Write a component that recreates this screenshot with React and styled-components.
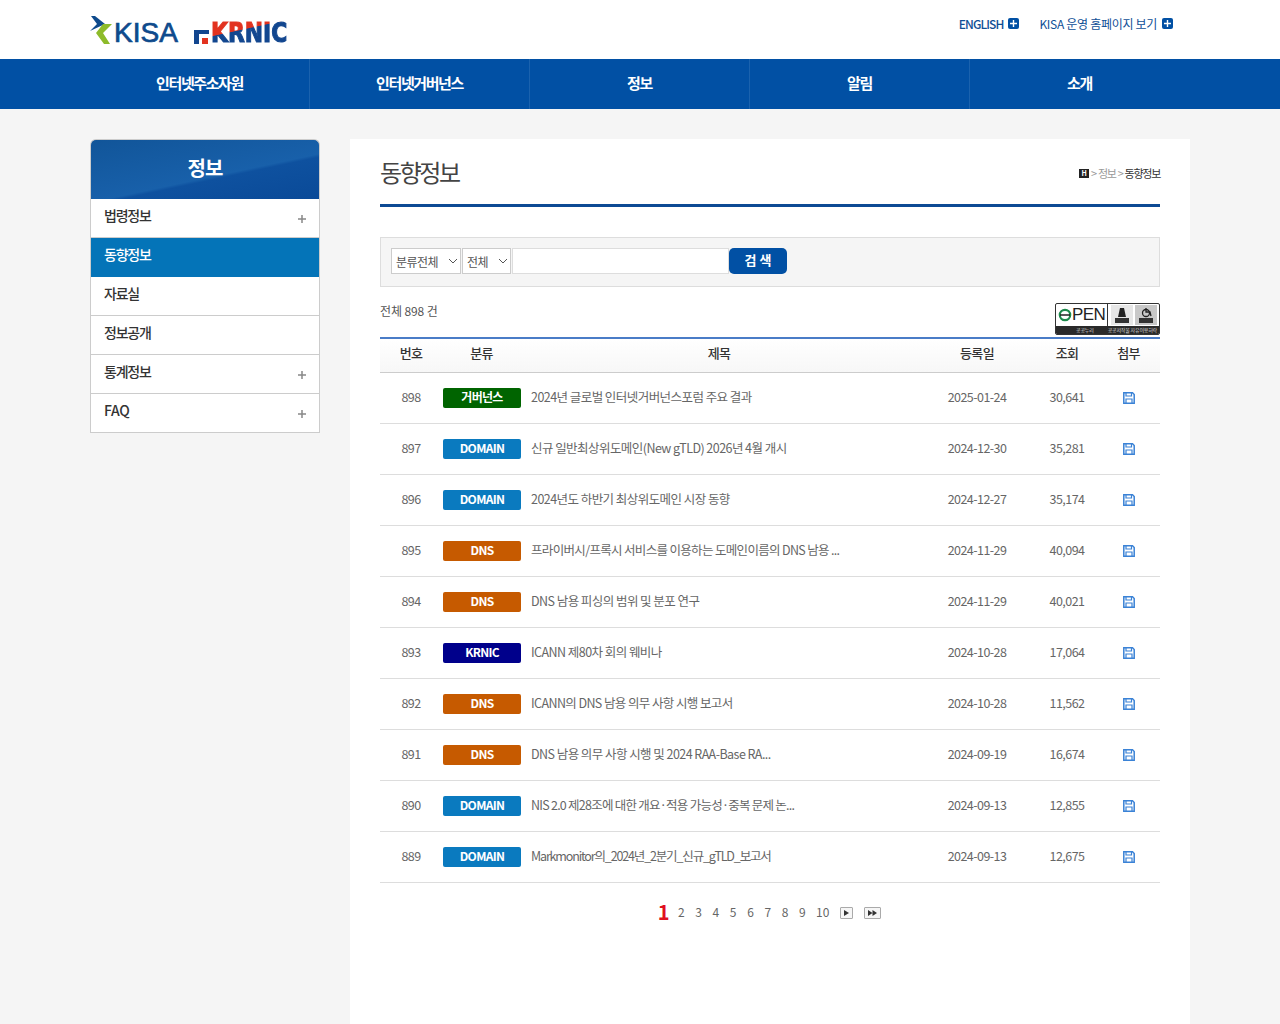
import React from 'react';
import styled, { createGlobalStyle } from 'styled-components';

const GlobalStyle = createGlobalStyle`
  html, body {
    margin: 0;
    padding: 0;
    background: #f5f5f5;
    font-family: "Noto Sans CJK KR", "Noto Sans", sans-serif;
    color: #555;
  }
  * { box-sizing: border-box; }
`;

const Page = styled.div`
  width: 1280px;
  height: 1024px;
  overflow: hidden;
`;

const Header = styled.header`
  height: 59px;
  background: #fff;
  padding: 0 90px;
  display: flex;
  justify-content: space-between;
`;

const Logos = styled.div`
  display: flex;
  align-items: flex-start;
  padding-top: 15px;
`;

const KisaLogo = styled.div`
  display: flex;
  align-items: center;
  width: 104px;
  height: 30px;
`;

const KisaText = styled.span`
  font-family: "Liberation Sans", sans-serif;
  font-size: 28px;
  line-height: 30px;
  letter-spacing: 0;
  color: #0e4a8c;
  -webkit-text-stroke: 0.7px #0e4a8c;
  padding-top: 5px;
`;

const KrnicLogo = styled.div`
  display: flex;
  align-items: flex-end;
  height: 29px;
  padding-top: 6px;
`;

const KrnicText = styled.span`
  font-family: "DejaVu Sans", sans-serif;
  font-weight: 700;
  font-size: 27px;
  line-height: 23px;
  transform: scaleX(0.81);
  transform-origin: left;
  margin-left: 2px;
  -webkit-text-stroke: 1.2px transparent;
  background: linear-gradient(170deg, #e2321f 0 38%, #12468f 40% 100%);
  -webkit-background-clip: text;
  background-clip: text;
  color: transparent;
`;

const TopLinks = styled.div`
  display: flex;
  gap: 20px;
  padding: 14px 17px 0 0;
`;

const TopLink = styled.a`
  display: flex;
  align-items: center;
  gap: 5px;
  height: 18px;
  font-size: 12px;
  letter-spacing: ${p => (p.$bold ? '-0.9px' : '-0.3px')};
  color: #0f4f96;
  font-weight: ${p => (p.$bold ? 500 : 400)};
`;

const PlusBox = styled.span`
  width: 11px;
  height: 11px;
  border-radius: 2px;
  background: #0150a4;
  color: #fff;
  display: flex;
  align-items: center;
  justify-content: center;
  margin-top: 1px;
`;

const Nav = styled.nav`
  height: 50px;
  background: #0150a4;
  padding: 0 90px;
  display: flex;
`;

const NavItem = styled.a`
  width: 220px;
  display: flex;
  align-items: center;
  justify-content: center;
  color: #fff;
  font-size: 15px;
  font-weight: 700;
  letter-spacing: -1.4px;
  padding-bottom: 4px;
  border-right: 1px solid ${p => (p.$last ? 'transparent' : '#1a62ae')};
`;

const Body = styled.div`
  display: flex;
  gap: 30px;
  padding: 30px 90px 0;
`;

const Side = styled.aside`
  width: 230px;
  flex-shrink: 0;
`;

const SideTitle = styled.div`
  height: 60px;
  border: 1px solid #ccc;
  border-bottom: 0;
  border-radius: 6px 6px 0 0;
  display: flex;
  align-items: center;
  justify-content: center;
  color: #fff;
  font-size: 20px;
  font-weight: 700;
  letter-spacing: -0.8px;
  padding-bottom: 4px;
  background: linear-gradient(168deg, #115599 0%, #1860aa 58%, #0e519f 61%, #0a4a98 100%);
`;

const SideList = styled.ul`
  list-style: none;
  margin: 0;
  padding: 0;
  border: 1px solid #ccc;
  border-top: 0;
`;

const SideItem = styled.li`
  height: 39px;
  padding: 0 13px 6px;
  display: flex;
  align-items: center;
  justify-content: space-between;
  font-size: 14px;
  font-weight: 500;
  letter-spacing: ${p => (p.$latin ? '-0.3px' : '-1.2px')};
  color: ${p => (p.$active ? '#fff' : '#333')};
  background: ${p => (p.$active ? '#0474b8' : '#fff')};
  border-bottom: 1px solid ${p => (p.$active ? '#0474b8' : '#ccc')};
  &:last-child { border-bottom: 0; height: 38px; }
`;

const SidePlus = styled.span`
  color: #888;
  display: flex;
  margin: 7px 0 0;
`;

const Main = styled.main`
  width: 840px;
  height: 900px;
  background: #fff;
  padding: 0 30px;
`;

const TitleRow = styled.div`
  height: 68px;
  border-bottom: 3px solid #0d4a94;
  display: flex;
  align-items: flex-start;
  justify-content: space-between;
`;

const PageTitle = styled.h2`
  margin: 14px 0 0;
  font-size: 24px;
  line-height: 38px;
  font-weight: 400;
  letter-spacing: -2.4px;
  color: #444;
`;

const Crumbs = styled.div`
  margin-top: 26px;
  display: flex;
  align-items: center;
  gap: 2px;
  font-size: 11px;
  line-height: 17px;
  letter-spacing: -1.25px;
  color: #999;
`;

const HomeMark = styled.span`
  width: 10px;
  height: 9px;
  background: #222;
  color: #fff;
  font-size: 7px;
  line-height: 9px;
  font-weight: 700;
  text-align: center;
  letter-spacing: 0;
`;

const CrumbNow = styled.span`
  color: #333;
`;

const SearchBox = styled.form`
  margin-top: 30px;
  height: 50px;
  background: #f5f5f5;
  border: 1px solid #ddd;
  padding: 10px 10px 0;
  display: flex;
  align-items: flex-start;
`;

const FakeSelect = styled.div`
  width: ${p => p.$width}px;
  height: 26px;
  background: #fff;
  border: 1px solid #ccc;
  margin-right: 1px;
  padding: 0 2px 0 4px;
  display: flex;
  align-items: center;
  justify-content: space-between;
  font-size: 12px;
  letter-spacing: -0.5px;
  color: #555;
  svg { color: #555; }
`;

const SearchInput = styled.input`
  width: 217px;
  height: 26px;
  background: #fff;
  border: 1px solid #ddd;
  outline: 0;
  margin: 0;
`;

const SearchButton = styled.button`
  width: 58px;
  height: 26px;
  border: 0;
  border-radius: 5px;
  background: #0150a4;
  color: #fff;
  font-family: inherit;
  font-size: 13px;
  font-weight: 700;
  letter-spacing: 0;
  padding: 0 0 4px;
`;

const InfoRow = styled.div`
  height: 50px;
  display: flex;
  justify-content: space-between;
  align-items: flex-start;
  padding-top: 15px;
`;

const Total = styled.span`
  font-size: 12px;
  line-height: 18px;
  letter-spacing: -0.1px;
  color: #555;
`;

const OpenBadge = styled.div`
  width: 105px;
  height: 32px;
  margin-top: 1px;
  display: flex;
  flex-direction: column;
  border: 1px solid #333;
  border-radius: 2px;
  background: #fff;
  overflow: hidden;
`;

const BadgeTop = styled.div`
  height: 22px;
  display: flex;
  align-items: center;
  padding-left: 2px;
`;

const OpenWord = styled.span`
  font-family: "Liberation Sans", sans-serif;
  font-size: 17px;
  line-height: 22px;
  letter-spacing: -0.6px;
  color: #222;
  flex: 1;
  display: flex;
  align-items: center;
  border-right: 1px solid #333;
  margin-right: 3px;
`;

const BadgeCell = styled.span`
  width: 22px;
  height: 20px;
  margin-right: 2px;
  display: flex;
  align-items: center;
  justify-content: center;
  background: ${p => (p.$light ? '#c8c8c8' : '#e6e6e6')};
`;

const BadgeBottom = styled.div`
  flex: 1;
  background: #2a2a2a;
  color: #ddd;
  font-size: 5px;
  line-height: 8px;
  display: flex;
  justify-content: space-between;
  padding: 0 2px 0 20px;
  letter-spacing: -0.2px;
`;

const Table = styled.table`
  width: 780px;
  border-collapse: collapse;
  table-layout: fixed;
  border-top: 2px solid #4a7cc7;
`;

const HeadCell = styled.th`
  height: 34px;
  border-bottom: 1px solid #ccc;
  background: linear-gradient(180deg, #fff 0%, #f7f7f7 100%);
  font-size: 13px;
  font-weight: 500;
  letter-spacing: -0.7px;
  color: #333;
  padding: 0 0 5px;
`;

const Cell = styled.td`
  height: 51px;
  border-bottom: 1px solid #ddd;
  text-align: ${p => (p.$left ? 'left' : 'center')};
  font-size: 12.5px;
  letter-spacing: ${p => p.$spacing || '-0.55px'};
  color: #666;
  padding: ${p => (p.$left ? '0 10px 2px' : '0 0 2px')};
  white-space: nowrap;
`;

const IconCell = styled.td`
  height: 51px;
  border-bottom: 1px solid #ddd;
  padding: 0;
`;

const Badge = styled.span`
  display: block;
  width: 78px;
  height: 20px;
  margin: 2px 0 0 1px;
  border-radius: 2px;
  background: ${p => p.$color};
  color: #fff;
  font-size: 12px;
  font-weight: 700;
  line-height: 18px;
  text-align: center;
  letter-spacing: -0.7px;
`;

const FileIcon = styled.svg`
  display: block;
  margin: 0 auto;
`;

const Pager = styled.div`
  display: flex;
  align-items: center;
  justify-content: center;
  margin-top: 17px;
  padding-right: 4px;
  height: 24px;
  font-size: 12px;
  color: #666;
`;

const PageNum = styled.a`
  width: 17.3px;
  margin-left: ${p => (p.$wide ? '3px' : '0')};
  text-align: center;
`;

const PageCurrent = styled.a`
  width: 18px;
  text-align: center;
  color: #e0101f;
  font-size: 20px;
  font-weight: 700;
  line-height: 24px;
`;

const PageArrow = styled.span`
  width: ${p => p.$width}px;
  height: 12px;
  margin: 2px 0 0 ${p => p.$gap}px;
  border: 1px solid #aaa;
  border-radius: 1px;
  background: #f6f6f6;
  display: flex;
  align-items: center;
  justify-content: center;
`;

const menus = ['인터넷주소자원', '인터넷거버넌스', '정보', '알림', '소개'];

const sideMenus = [
  { name: '법령정보', plus: true },
  { name: '동향정보', active: true },
  { name: '자료실' },
  { name: '정보공개' },
  { name: '통계정보', plus: true },
  { name: 'FAQ', plus: true, latin: true },
];

const colors = {
  거버넌스: '#006400',
  DOMAIN: '#0a7abf',
  DNS: '#c65a00',
  KRNIC: '#00008b',
};

const rows = [
  [898, '거버넌스', '2024년 글로벌 인터넷거버넌스포럼 주요 결과', '2025-01-24', '30,641'],
  [897, 'DOMAIN', '신규 일반최상위도메인(New gTLD) 2026년 4월 개시', '2024-12-30', '35,281'],
  [896, 'DOMAIN', '2024년도 하반기 최상위도메인 시장 동향', '2024-12-27', '35,174'],
  [895, 'DNS', '프라이버시/프록시 서비스를 이용하는 도메인이름의 DNS 남용 ...', '2024-11-29', '40,094', '-0.67px'],
  [894, 'DNS', 'DNS 남용 피싱의 범위 및 분포 연구', '2024-11-29', '40,021'],
  [893, 'KRNIC', 'ICANN 제80차 회의 웨비나', '2024-10-28', '17,064'],
  [892, 'DNS', 'ICANN의 DNS 남용 의무 사항 시행 보고서', '2024-10-28', '11,562', '-0.6px'],
  [891, 'DNS', 'DNS 남용 의무 사항 시행 및 2024 RAA-Base RA...', '2024-09-19', '16,674'],
  [890, 'DOMAIN', 'NIS 2.0 제28조에 대한 개요·적용 가능성·중복 문제 논...', '2024-09-13', '12,855', '-0.75px'],
  [889, 'DOMAIN', 'Markmonitor의_2024년_2분기_신규_gTLD_보고서', '2024-09-13', '12,675', '-1.15px'],
];

const widths = [62, 79, 396, 120, 60, 63];

const Plus = ({ size = 7, weight = 1.6 }) => (
  <svg width={size} height={size} viewBox="0 0 8 8">
    <path d="M4 0v8M0 4h8" stroke="currentColor" strokeWidth={weight} />
  </svg>
);

const Chevron = () => (
  <svg width="10" height="6" viewBox="0 0 10 6" fill="none">
    <path d="M1 1l4 4 4-4" stroke="currentColor" strokeWidth="1" />
  </svg>
);

const KisaMark = () => (
  <svg width="24" height="28" viewBox="0 0 24 28">
    <path d="M1 0h4l10 8-15 7 7-7z" fill="#0e4a8c" />
    <path d="M22 8h-9L6 17l8 11h6l-7-11z" fill="#8dbb2a" />
  </svg>
);

const Disk = () => (
  <FileIcon width="12" height="12" viewBox="0 0 12 12" fill="none">
    <path d="M.8.8h8.7l1.7 1.7v8.7H.8z" stroke="#3a82d6" strokeWidth="1.5" />
    <path d="M3 1v3h5.5V1M3 11V7h6v4" stroke="#3a82d6" strokeWidth="1.2" />
  </FileIcon>
);

const App = () => (
  <Page>
    <GlobalStyle />
    <Header>
      <Logos>
        <KisaLogo>
          <KisaMark />
          <KisaText>KISA</KisaText>
        </KisaLogo>
        <KrnicLogo>
          <svg width="15" height="14" viewBox="0 0 15 14">
            <path d="M0 0h15v4H5v10H0z" fill="#12468f" />
            <path d="M8 8h6v6H8z" fill="#e2321f" />
          </svg>
          <KrnicText>KRNIC</KrnicText>
        </KrnicLogo>
      </Logos>
      <TopLinks>
        <TopLink $bold>
          ENGLISH
          <PlusBox><Plus size={7} /></PlusBox>
        </TopLink>
        <TopLink>
          KISA 운영 홈페이지 보기
          <PlusBox><Plus size={7} /></PlusBox>
        </TopLink>
      </TopLinks>
    </Header>
    <Nav>
      {menus.map((m, i) => (
        <NavItem key={m} $last={i === menus.length - 1}>{m}</NavItem>
      ))}
    </Nav>
    <Body>
      <Side>
        <SideTitle>정보</SideTitle>
        <SideList>
          {sideMenus.map(({ name, plus, active, latin }) => (
            <SideItem key={name} $active={active} $latin={latin}>
              {name}
              {plus && <SidePlus><Plus size={8} weight={1.5} /></SidePlus>}
            </SideItem>
          ))}
        </SideList>
      </Side>
      <Main>
        <TitleRow>
          <PageTitle>동향정보</PageTitle>
          <Crumbs>
            <HomeMark>H</HomeMark>
            <span>&gt;</span>
            <span>정보</span>
            <span>&gt;</span>
            <CrumbNow>동향정보</CrumbNow>
          </Crumbs>
        </TitleRow>
        <SearchBox>
          <FakeSelect $width={70}>분류전체 <Chevron /></FakeSelect>
          <FakeSelect $width={49}>전체 <Chevron /></FakeSelect>
          <SearchInput type="text" />
          <SearchButton type="button">검 색</SearchButton>
        </SearchBox>
        <InfoRow>
          <Total>전체 898 건</Total>
          <OpenBadge>
            <BadgeTop>
              <OpenWord>
                <svg width="14" height="14" viewBox="0 0 14 14" fill="none">
                  <circle cx="7" cy="7" r="5.2" stroke="#1d8a4c" strokeWidth="2.2" />
                  <path d="M2 7h10" stroke="#222" strokeWidth="1.4" />
                </svg>
                PEN
              </OpenWord>
              <BadgeCell>
                <svg width="16" height="17" viewBox="0 0 16 17">
                  <path d="M6 1h4l2 9H4z" fill="#222" />
                  <path d="M1 11h14v5H1z" fill="#333" />
                </svg>
              </BadgeCell>
              <BadgeCell $light>
                <svg width="16" height="17" viewBox="0 0 16 17" fill="none">
                  <circle cx="8" cy="6" r="3.5" stroke="#222" strokeWidth="1.3" />
                  <path d="M8 1v4h4l1 4" stroke="#222" strokeWidth="1.3" />
                  <path d="M1 11h14v5H1z" fill="#333" />
                </svg>
              </BadgeCell>
            </BadgeTop>
            <BadgeBottom>
              <span>공공누리</span>
              <span>공공저작물 자유이용허락</span>
            </BadgeBottom>
          </OpenBadge>
        </InfoRow>
        <Table>
          <colgroup>
            {widths.map((w, i) => <col key={i} width={w} />)}
          </colgroup>
          <thead>
            <tr>
              {['번호', '분류', '제목', '등록일', '조회', '첨부'].map(h => (
                <HeadCell key={h}>{h}</HeadCell>
              ))}
            </tr>
          </thead>
          <tbody>
            {rows.map(([no, cat, title, date, views, spacing]) => (
              <tr key={no}>
                <Cell>{no}</Cell>
                <Cell><Badge $color={colors[cat]}>{cat}</Badge></Cell>
                <Cell $left $spacing={spacing}>{title}</Cell>
                <Cell>{date}</Cell>
                <Cell>{views}</Cell>
                <IconCell><Disk /></IconCell>
              </tr>
            ))}
          </tbody>
        </Table>
        <Pager>
          <PageCurrent>1</PageCurrent>
          {[2, 3, 4, 5, 6, 7, 8, 9, 10].map(n => <PageNum key={n} $wide={n === 10}>{n}</PageNum>)}
          <PageArrow $width={13} $gap={9}>
            <svg width="5" height="6" viewBox="0 0 5 6"><path d="M0 0l5 3-5 3z" fill="#333" /></svg>
          </PageArrow>
          <PageArrow $width={17} $gap={11}>
            <svg width="9" height="6" viewBox="0 0 9 6"><path d="M0 0l4.5 3L0 6zM4.5 0L9 3 4.5 6z" fill="#333" /></svg>
          </PageArrow>
        </Pager>
      </Main>
    </Body>
  </Page>
);

export default App;
